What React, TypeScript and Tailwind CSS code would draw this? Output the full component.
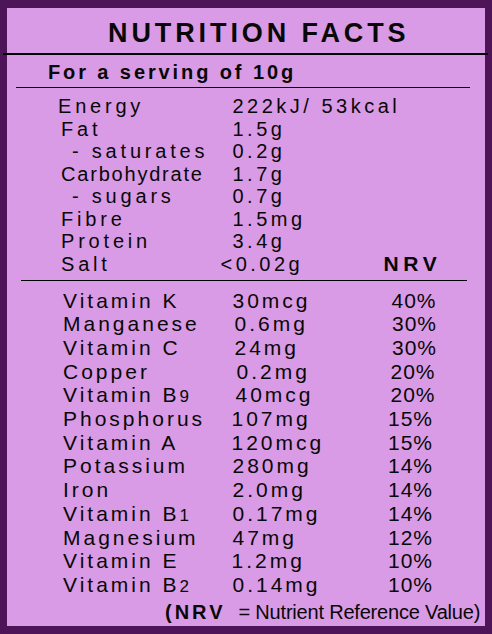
import React from 'react';

interface Row {
  name: React.ReactNode;
  value: string;
  nameCls?: string;
}

interface VitRow {
  name: React.ReactNode;
  value: string;
  pct: string;
  valueCls?: string;
  pctCls?: string;
}

// small trailing digit on the B vitamins
const B = (n: string) => (
  <>
    Vitamin B<span className="text-[17px] leading-none">{n}</span>
  </>
);

const macros: Row[] = [
  { name: 'Energy', value: '222kJ/ 53kcal', nameCls: '-ml-[3px] w-[174.5px]' },
  { name: 'Fat', value: '1.5g' },
  { name: '- saturates', value: '0.2g', nameCls: 'pl-[11px] w-[171.5px]' },
  { name: 'Carbohydrate', value: '1.7g', nameCls: 'tracking-[1.8px] w-[171.5px]' },
  { name: '- sugars', value: '0.7g', nameCls: 'pl-[11px] w-[171.5px]' },
  { name: 'Fibre', value: '1.5mg' },
  { name: 'Protein', value: '3.4g' },
];

const vitamins: VitRow[] = [
  { name: 'Vitamin K', value: '30mcg', pct: '40%', pctCls: 'ml-[2px]' },
  { name: 'Manganese', value: '0.6mg', pct: '30%', valueCls: 'pl-[2px] w-[157px]', pctCls: 'ml-[2.5px]' },
  { name: 'Vitamin C', value: '24mg', pct: '30%', valueCls: 'pl-[2px] w-[157px]', pctCls: 'ml-[2.5px]' },
  { name: 'Copper', value: '0.2mg', pct: '20%', valueCls: 'pl-[4px] w-[157px]', pctCls: 'ml-[1px]' },
  { name: B('9'), value: '40mcg', pct: '20%', valueCls: 'pl-[3px] w-[157px]', pctCls: 'ml-[1px]' },
  { name: 'Phosphorus', value: '107mg', pct: '15%', valueCls: '-ml-[1px] w-[158px]', pctCls: '-ml-[1.5px]' },
  { name: 'Vitamin A', value: '120mcg', pct: '15%', valueCls: '-ml-[1px] w-[158px]', pctCls: '-ml-[1.5px]' },
  { name: 'Potassium', value: '280mg', pct: '14%', pctCls: '-ml-[1.5px]' },
  { name: 'Iron', value: '2.0mg', pct: '14%', pctCls: '-ml-[1.5px]' },
  { name: B('1'), value: '0.17mg', pct: '14%', pctCls: '-ml-[1.5px]' },
  { name: 'Magnesium', value: '47mg', pct: '12%', pctCls: '-ml-[1.5px]' },
  { name: 'Vitamin E', value: '1.2mg', pct: '10%', valueCls: '-ml-[1px] w-[158px]', pctCls: '-ml-[1.5px]' },
  { name: B('2'), value: '0.14mg', pct: '10%', pctCls: '-ml-[1.5px]' },
];

const App: React.FC = () => {
  return (
    <div className="w-[492px] h-[634px] bg-[#4e1458] pt-[8px] pl-[7px] pr-[7px] pb-[8px] font-['Liberation_Sans',Arial,sans-serif] text-[#080808]">
      <div className="h-full bg-[#d99be5] flex flex-col">
        {/* Title */}
        <div className="pt-[10px] pl-[101px] text-[27px] leading-[30px] font-bold tracking-[3.9px] whitespace-nowrap">
          NUTRITION FACTS
        </div>
        <div className="mt-[5px] -ml-[4px] -mr-[3px] h-[2px] bg-black" />

        <div className="mt-[5px] pl-[41px] text-[20px] leading-[24px] font-bold tracking-[2.9px] whitespace-nowrap">
          For a serving of 10g
        </div>
        <div className="mt-[3px] ml-[9px] w-[454px] h-px bg-black" />

        {/* Main nutrients */}
        <div className="mt-[7px] pl-[54px] text-[20px] leading-[22.5px] tracking-[3.8px] whitespace-nowrap">
          {macros.map((row, i) => (
            <div key={i} className="flex items-baseline">
              <span className={`shrink-0 ${row.nameCls ?? 'w-[171.5px]'}`}>{row.name}</span>
              <span className="tracking-[3.5px]">{row.value}</span>
            </div>
          ))}
          <div className="flex items-baseline">
            <span className="shrink-0 w-[171.5px]">Salt</span>
            <span className="shrink-0 -ml-[12px] w-[163px] tracking-[3.5px]">&lt;0.02g</span>
            <span className="text-[21px] leading-[22px] font-bold tracking-[4.6px]">NRV</span>
          </div>
        </div>
        <div className="mt-[5px] ml-[14px] w-[446px] h-px bg-black" />

        {/* Vitamins and minerals */}
        <div className="mt-[7.5px] pl-[56px] text-[21px] leading-[23.7px] tracking-[3px] whitespace-nowrap">
          {vitamins.map((row, i) => (
            <div key={i} className="flex items-baseline">
              <span className="shrink-0 w-[169.5px]">{row.name}</span>
              <span className={`shrink-0 tracking-[3px] ${row.valueCls ?? 'w-[157px]'}`}>{row.value}</span>
              <span className={`tracking-[1px] ${row.pctCls ?? ''}`}>{row.pct}</span>
            </div>
          ))}
        </div>

        {/* Footnote */}
        <div className="mt-[3px] pl-[158px] flex items-baseline leading-[24px] whitespace-nowrap">
          <span className="text-[20px] font-bold tracking-[3px]">(NRV</span>
          <span className="ml-[13px] text-[20px] tracking-[-0.2px]">= Nutrient Reference Value)</span>
        </div>
      </div>
    </div>
  );
};

export default App;
